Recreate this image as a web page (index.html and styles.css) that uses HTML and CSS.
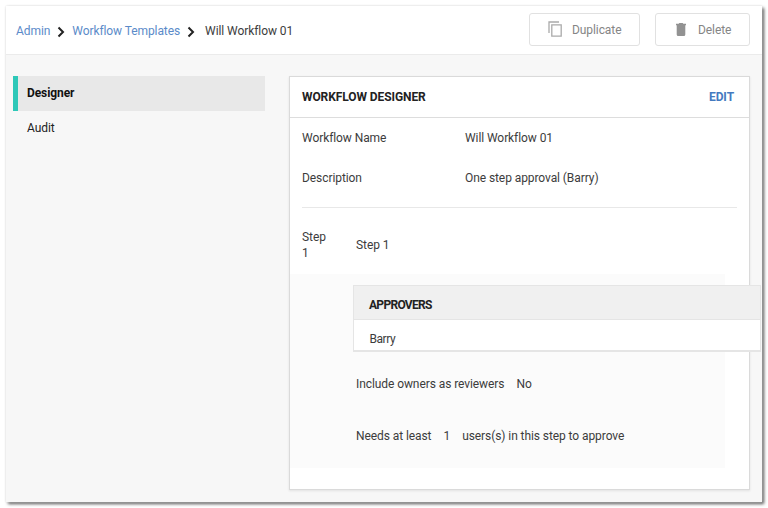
FILE: index.html
```html
<!DOCTYPE html>
<html lang="en">
<head>
<meta charset="utf-8">
<title>Will Workflow 01</title>
<link rel="stylesheet" href="styles.css">
</head>
<body>
<div class="window">
  <header class="topbar">
    <nav class="crumbs">
      <a class="link">Admin</a>
      <svg class="chevron" viewBox="0 0 8 12"><path d="M1.5 1.5 6 6 1.5 10.5"/></svg>
      <a class="link">Workflow Templates</a>
      <svg class="chevron" viewBox="0 0 8 12"><path d="M1.5 1.5 6 6 1.5 10.5"/></svg>
      <span class="current">Will Workflow 01</span>
    </nav>
    <div class="actions">
      <button class="btn duplicate"><svg class="copy" viewBox="0 0 15 17"><path d="M1 12V1h10M3.8 3.8h9.4v11.4H3.8z"/></svg><span>Duplicate</span></button>
      <button class="btn delete"><svg class="trash" viewBox="0 0 10 13"><path d="M0 .8h2.7L3.3 0h3.4l.6.8H10v1.5H0zM.7 2.3h8.6v9.2q0 1.5-1.5 1.5H2.2Q.7 13 .7 11.5z"/></svg><span>Delete</span></button>
    </div>
  </header>
  <main class="content">
    <aside class="sidebar">
      <a class="tab active">Designer</a>
      <a class="tab">Audit</a>
    </aside>
    <section class="card">
      <div class="card-head"><h1>WORKFLOW DESIGNER</h1><a class="edit">EDIT</a></div>
      <div class="fields">
        <div class="field"><span>Workflow Name</span><span>Will Workflow 01</span></div>
        <div class="field"><span>Description</span><span>One step approval (Barry)</span></div>
      </div>
      <div class="step-head"><span class="step-label">Step 1</span><span>Step 1</span></div>
      <div class="step-body">
        <div class="approvers">
          <h2>APPROVERS</h2>
          <div class="person">Barry</div>
        </div>
        <div class="option reviewers"><span>Include owners as reviewers</span><span>No</span></div>
        <div class="option"><span>Needs at least</span><span>1</span><span>users(s) in this step to approve</span></div>
      </div>
    </section>
  </main>
</div>
</body>
</html>
```
FILE: styles.css
```css
* { box-sizing: border-box; }
body {
  margin: 0;
  padding: 6px 6px 0;
  height: 508px;
  overflow: hidden;
  background: #fff;
  color: #3c3c3c;
  font: 12px/16px Roboto, "Liberation Sans", sans-serif;
  letter-spacing: -.08px;
}
.window {
  width: 756px;
  height: 496px;
  background: #f7f7f7;
  box-shadow: 0 0 2px #ddd, 2px 2px 3px #555;
}
.topbar {
  display: flex;
  justify-content: space-between;
  height: 49px;
  padding: 7px 12px 0 10px;
  background: #fff;
  border-bottom: 1px solid #ebebeb;
}
.crumbs { display: flex; align-items: center; height: 35px; }
.link { color: #5b8bc9; }
.chevron {
  width: 8px;
  height: 12px;
  margin: 2px 7px 0;
  fill: none;
  stroke: #222;
  stroke-width: 2;
}
.current { margin-left: 3px; }
.actions { display: flex; gap: 15px; }
.btn {
  display: flex;
  align-items: center;
  height: 33px;
  padding: 0;
  background: #fff;
  border: 1px solid #e1e1e1;
  border-radius: 3px;
  color: #858585;
  font: inherit;
  letter-spacing: inherit;
}
.duplicate { width: 111px; padding-left: 18px; gap: 9px; }
.delete { width: 95px; padding-left: 20px; gap: 12px; }
.copy { width: 15px; height: 17px; fill: none; stroke: #aaa; stroke-width: 1.3; }
.trash { width: 10px; height: 13px; fill: #929292; }
.content { display: flex; align-items: flex-start; gap: 24px; padding: 21px 0 0 7px; }
.sidebar { width: 252px; flex: none; }
.tab {
  display: block;
  height: 35px;
  padding: 9px 0 0 9px;
  border-left: 5px solid transparent;
  color: #222;
}
.active { background: #e8e8e8; border-color: #2ec8b8; color: #111; font-weight: 700; }
.card {
  width: 461px;
  height: 414px;
  flex: none;
  background: #fff;
  border: 1px solid #dadada;
  box-shadow: 0 1px 2px #e2e2e2;
}
.card-head {
  display: flex;
  justify-content: space-between;
  align-items: center;
  height: 41px;
  padding: 0 15px 0 12px;
  border-bottom: 1px solid #ddd;
}
h1, h2 { margin: 0; font-size: 12px; line-height: 16px; font-weight: 700; color: #222; }
.edit { color: #447abf; font-weight: 700; }
.fields { height: 90px; margin: 0 12px; border-bottom: 1px solid #e8e8e8; }
.field { display: grid; grid-template-columns: 163px 1fr; height: 40px; align-items: center; }
.step-head { display: flex; align-items: center; height: 66px; padding: 9px 12px 0; }
.step-head > span { margin-bottom: 1px; }
.step-label { width: 30px; margin-right: 24px; }
.step-body { width: 435px; height: 194px; padding: 11px 0 0 63px; background: #fbfbfb; }
.approvers { width: 408px; height: 67px; background: #fff; border: 1px solid #e5e5e5; border-bottom-width: 2px; }
.approvers h2 { height: 34px; padding: 11px 15px 0; background: #f0f0f0; border-bottom: 1px solid #e5e5e5; letter-spacing: -.7px; }
.person { padding: 11px 15.5px 0; letter-spacing: -.45px; }
.option { display: flex; gap: 12px; padding-left: 3px; margin-top: 36px; }
.reviewers { margin-top: 24px; }
```
